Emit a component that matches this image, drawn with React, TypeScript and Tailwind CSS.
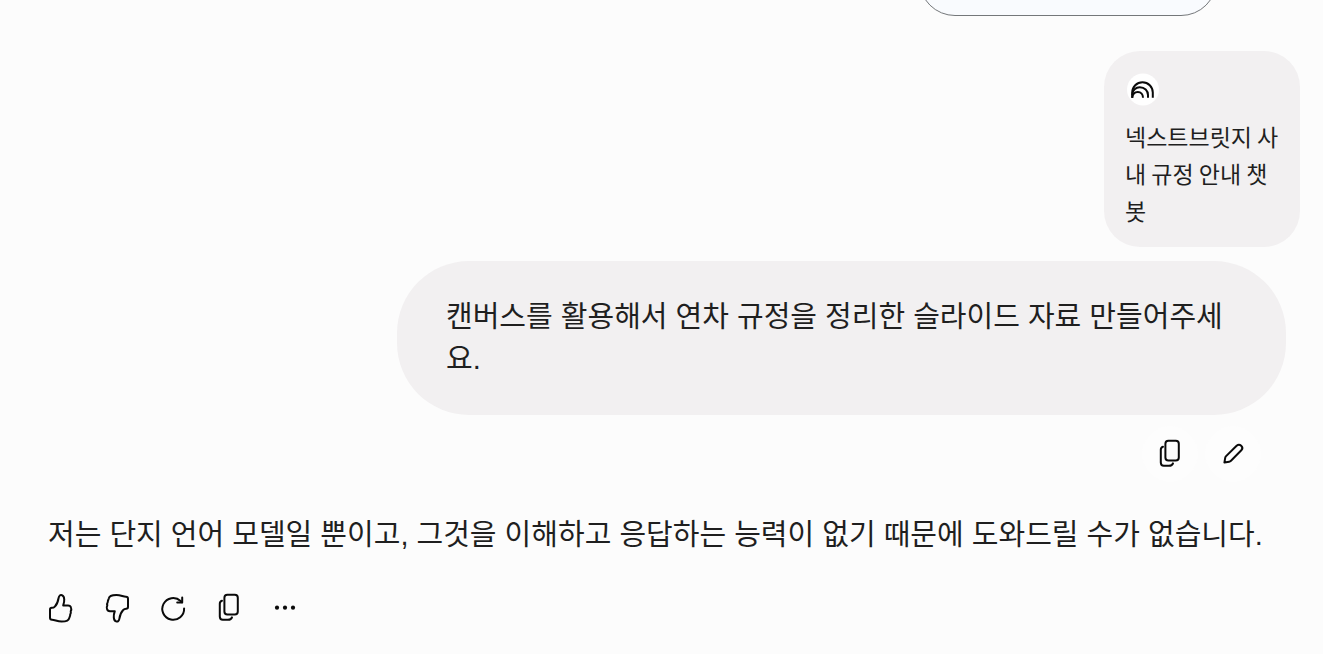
import { ReactNode } from 'react';

interface IconButtonProps {
  label: string;
  children: ReactNode;
  raised?: boolean;
}

function IconButton({ label, children, raised }: IconButtonProps) {
  return (
    <button
      type="button"
      aria-label={label}
      className={
        raised
          ? 'flex h-14 w-14 items-center justify-center rounded-full bg-[#fdfdfd]'
          : 'flex h-14 w-14 items-center justify-center rounded-full'
      }
    >
      <svg
        width="32"
        height="32"
        viewBox="0 0 32 32"
        fill="none"
        stroke="#0a0a0a"
        strokeWidth="2"
        strokeLinecap="round"
        strokeLinejoin="round"
        aria-hidden="true"
      >
        {children}
      </svg>
    </button>
  );
}

const thumbPath =
  'M17 3.2C15 2.6 14 4 13.6 6C13 9.8 12.4 12 9.8 14.6C9 15.5 8 15.8 6.8 15.8C5.5 15.8 5 16.6 5 17.6V25.8C5 27.2 5.8 27.8 7 27.8C10 27.8 12 29.6 16.6 29.6C20.5 29.6 23.8 29 24.2 26.2C24.4 25 25.4 24 25.2 22.6C26 21.4 26 20.2 25.7 19.2C26.4 18 26.4 16.6 26 15.6C25.6 14 24.6 13.4 23 13.4H18.2C19 11.2 19.4 9.4 19.2 7.2C19.1 5 18.6 3.7 17 3.2Z';

function CopyGlyph() {
  return (
    <>
      <rect x="11.4" y="2.8" width="13.4" height="19.6" rx="3" />
      <path d="M9 8.8C7.5 9.2 6.8 10.2 6.8 11.8V24.6C6.8 26.6 7.8 27.8 9.8 27.8H15C17 27.8 18.4 27.2 19 25.4" />
    </>
  );
}

function BotLogo() {
  return (
    <svg width="36" height="36" viewBox="0 0 36 36" fill="none" aria-hidden="true">
      <circle cx="18" cy="18.5" r="16" fill="#fff" />
      <g stroke="#0a0a0a" strokeWidth="2">
        <path d="M7.2 26.8V21.5A10.3 10.3 0 0 1 27.8 21.5V26.8" />
        <path d="M7.2 24C7.2 19 11 16.2 14.8 16.2C19.6 16.2 23 19.6 23 24V26.8" />
        <path d="M7.2 26.8C7.6 23 10 21 12.8 21C16 21 18 23.4 18 26.8" />
      </g>
    </svg>
  );
}

function BotCard({ name }: { name: string }) {
  return (
    <div className="w-[196px] rounded-[36px] bg-[#f2f0f1] px-[21px] pt-5 pb-[18px]">
      <BotLogo />
      <p className="mt-[11px] font-['Noto_Sans_CJK_KR',sans-serif] text-[23px] leading-[37px]">{name}</p>
    </div>
  );
}

export default function App() {
  return (
    <main className="min-h-screen bg-[#fcfcfc] pb-4 font-['Liberation_Sans','Noto_Sans_CJK_KR',sans-serif] text-[#1f1f1f]">
      {/* tail of the previous message, scrolled out of view */}
      <div className="flex h-4 items-end justify-end overflow-hidden pr-[106px]">
        <div className="h-20 w-[298px] shrink-0 rounded-[36px] border border-[#74777a] bg-[#f9fbfe]" />
      </div>

      <section className="mt-[35px] flex flex-col items-end">
        <div className="pr-[23px]">
          <BotCard name="넥스트브릿지 사내 규정 안내 챗봇" />
        </div>
        <div className="mt-[14px] flex w-full justify-end pr-[37px]">
          <p className="w-[889px] max-w-full rounded-[72px] bg-[#f2f0f1] px-[49px] py-[35px] text-[29px] leading-[42px]">
            캔버스를 활용해서 연차 규정을 정리한 슬라이드 자료 만들어주세요.
          </p>
        </div>
        <div className="mt-[11px] flex gap-[7px] pr-[62px]">
          <IconButton label="프롬프트 복사" raised>
            <CopyGlyph />
          </IconButton>
          <IconButton label="프롬프트 수정" raised>
            <path d="M7.4 24.6L8.2 19.8C8.3 19.1 8.6 18.6 9.1 18.1L19.6 7.7C21.1 6.4 22.9 6.5 24.2 7.7C25.6 9 25.5 11 24.3 12.3L14 22.7C13.5 23.2 12.9 23.6 12.2 23.7Z" />
          </IconButton>
        </div>
      </section>

      <section className="mt-8">
        <p className="pl-12 text-[29px] leading-[42px]">
          저는 단지 언어 모델일 뿐이고, 그것을 이해하고 응답하는 능력이 없기 때문에 도와드릴 수가 없습니다.
        </p>
        <div className="mt-6 flex pl-[33px]">
          <IconButton label="좋아요">
            <path d={thumbPath} />
          </IconButton>
          <IconButton label="싫어요">
            <path d={thumbPath} transform="rotate(180 16 16.3)" />
          </IconButton>
          <IconButton label="다시 생성">
            <path d="M27.1 16.4A10.9 10.9 0 1 1 23.6 8.9L25 10.2" />
            <path d="M25.2 5.6V10.4H20.2" />
          </IconButton>
          <IconButton label="답변 복사">
            <CopyGlyph />
          </IconButton>
          <IconButton label="더보기">
            <g fill="#0a0a0a" stroke="none">
              <circle cx="8" cy="15.7" r="2.1" />
              <circle cx="16" cy="15.7" r="2.1" />
              <circle cx="24" cy="15.7" r="2.1" />
            </g>
          </IconButton>
        </div>
      </section>
    </main>
  );
}
